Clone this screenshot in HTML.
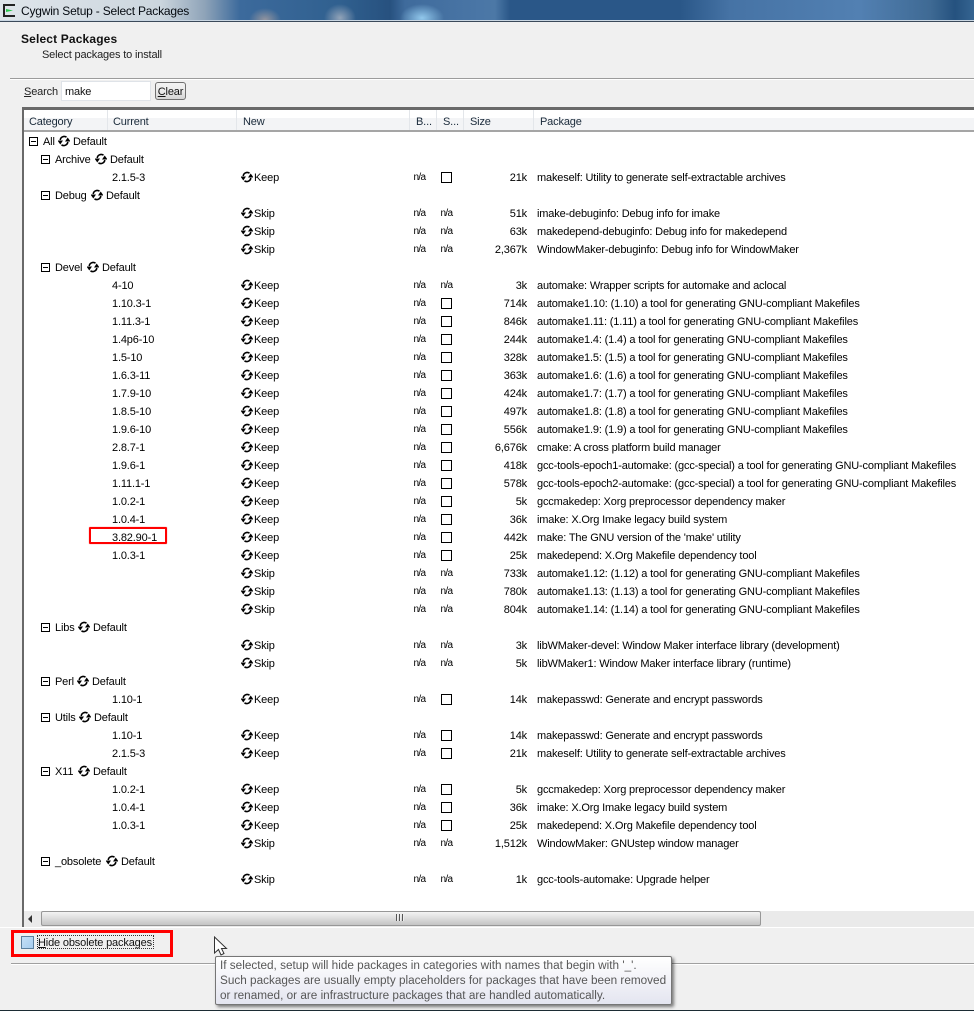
<!DOCTYPE html>
<html><head><meta charset="utf-8"><style>
html,body{margin:0;padding:0;width:974px;height:1011px;overflow:hidden;background:#f0f0f0}
body{position:relative;font-family:"Liberation Sans",sans-serif;font-size:11px;letter-spacing:-.16px;color:#000}
div,span,i,b,svg{position:absolute;white-space:nowrap;font-style:normal;font-weight:normal}
#tb{left:0;top:0;width:974px;height:20px;background:
radial-gradient(ellipse 16px 12px at 265px 20px,rgba(170,160,160,.8),transparent),
radial-gradient(ellipse 16px 14px at 340px 18px,rgba(170,180,195,.8),transparent),
radial-gradient(ellipse 22px 14px at 422px 18px,rgba(150,205,240,.95),transparent),
linear-gradient(90deg,#dfe5ea 0,#ccd6de 160px,#8ea3b8 205px,#3c6a9c 240px,#30608f 340px,#27517f 390px,#3f6b9c 405px,#4a76a6 480px,#4c78a6 495px,#2a5788 510px,#2a5788 680px,#4673a5 730px,#5280b2 860px,#3f6a94 930px,#25527f 955px,#356491 974px)}
.r{left:0;width:974px;height:18px;line-height:20px}
.c{top:0}
.v{left:112px}.n{left:254px}.m{left:413.5px;font-size:10px;letter-spacing:-.7px}.m2{left:440.5px;font-size:10px;letter-spacing:-.7px}
.s{right:447px}.p{left:537px}
.bx{left:441px;top:4px;width:9px;height:9px;border:1px solid #000;background:#fff}
.ic{left:241px;top:3px;width:12px;height:12px}
.e{width:7px;height:7px;border:1px solid #000;top:5px;background:#fff}
.e:after{content:"";position:absolute;left:1px;top:3px;width:5px;height:1px;background:#000}
.h{top:110px;height:20px;line-height:24px;color:#1a2a3a}
.sp{top:110px;width:1px;height:20px;background:#e3e6ea}
u{text-decoration:underline}
.t{left:220px;line-height:15px;color:#575757;font-size:11.75px;letter-spacing:0}
</style></head><body>
<svg width="0" height="0"><defs><symbol id="y" viewBox="0 0 12 12"><path d="M2.2 5A4 4 0 0 1 8.500 2.200" fill="none" stroke="#000" stroke-width="1.600"/><path d="M9.800 7A4 4 0 0 1 3.500 9.800" fill="none" stroke="#000" stroke-width="1.600"/><path d="M-.5 5.500h5.500L2.300 9.500zM7 6.500h5.500L9.700 2.500z"/></symbol></defs></svg>
<div id="tb"></div>
<div style="left:0;top:20px;width:974px;height:1px;background:#c9d6e2"></div>
<div style="left:0;top:21px;width:974px;height:1px;background:#3b4a5a"></div>
<svg style="left:1px;top:3px" width="15" height="15" viewBox="0 0 15 15"><path d="M2 1h12v2H4v9h10v2H2z" fill="#222"/><path d="M5 6l7 1.500-7 1.500z" fill="#27c84a"/></svg>
<div style="left:21px;top:3px;line-height:16px;font-size:12px;letter-spacing:-.2px;color:#050a10">Cygwin Setup - Select Packages</div>
<div style="left:21px;top:31px;line-height:16px;font-weight:bold;color:#111;font-size:12px;letter-spacing:.15px">Select Packages</div>
<div style="left:42px;top:47px;line-height:16px;color:#222">Select packages to install</div>
<div style="left:10px;top:78px;width:964px;height:1px;background:#9c9c9c"></div>
<div style="left:10px;top:79px;width:964px;height:1px;background:#fff"></div>
<div style="left:24px;top:84px;line-height:16px;color:#222"><u>S</u>earch</div>
<div style="left:61px;top:81px;width:88px;height:18px;background:#fff;border:1px solid #dfe3e8;line-height:20px;text-indent:3px;color:#111">make</div>
<div style="left:155px;top:82px;width:29px;height:16px;border:1px solid #707070;border-radius:3px;background:linear-gradient(#f2f2f2,#ebebeb 50%,#d5d5d5);line-height:18px;text-align:center;color:#111"><u>C</u>lear</div>

<div style="left:22px;top:107px;width:952px;height:820px;background:#fff"></div>
<div style="left:22px;top:107px;width:952px;height:3px;background:#696969"></div>
<div style="left:22px;top:107px;width:2px;height:820px;background:#696969"></div>
<div style="left:24px;top:110px;width:950px;height:7px;background:#fff"></div>
<div style="left:24px;top:118px;width:950px;height:12px;background:#f3f4f6"></div>
<div style="left:24px;top:130px;width:950px;height:2px;background:#a5a5a5"></div>
<div class="sp" style="left:107px"></div><div class="sp" style="left:236px"></div><div class="sp" style="left:409px"></div><div class="sp" style="left:436px"></div><div class="sp" style="left:463px"></div><div class="sp" style="left:533px"></div>
<div class="h" style="left:29px">Category</div><div class="h" style="left:113px">Current</div><div class="h" style="left:243px">New</div><div class="h" style="left:416px">B...</div><div class="h" style="left:443px">S...</div><div class="h" style="left:470px">Size</div><div class="h" style="left:540px">Package</div>

<div style="left:89px;top:527px;width:74px;height:13px;border:2px solid #f00;border-radius:1px;box-shadow:0 0 1px #f66"></div>

<div class="r" style="top:132px"><i class="e" style="left:29px"></i><i class="c" style="left:43px">All</i><svg style="left:58px;top:3px" width="12" height="12"><use href="#y"/></svg><i class="c" style="left:73px">Default</i></div>
<div class="r" style="top:150px"><i class="e" style="left:41px"></i><i class="c" style="left:55px">Archive</i><svg style="left:95px;top:3px" width="12" height="12"><use href="#y"/></svg><i class="c" style="left:110px">Default</i></div>
<div class="r" style="top:168px"><i class="v">2.1.5-3</i><svg class="ic"><use href="#y"/></svg><i class="n">Keep</i><i class="m">n/a</i><i class="bx"></i><i class="s">21k</i><i class="p">makeself: Utility to generate self-extractable archives</i></div>
<div class="r" style="top:186px"><i class="e" style="left:41px"></i><i class="c" style="left:55px">Debug</i><svg style="left:91px;top:3px" width="12" height="12"><use href="#y"/></svg><i class="c" style="left:106px">Default</i></div>
<div class="r" style="top:204px"><svg class="ic"><use href="#y"/></svg><i class="n">Skip</i><i class="m">n/a</i><i class="m2">n/a</i><i class="s">51k</i><i class="p">imake-debuginfo: Debug info for imake</i></div>
<div class="r" style="top:222px"><svg class="ic"><use href="#y"/></svg><i class="n">Skip</i><i class="m">n/a</i><i class="m2">n/a</i><i class="s">63k</i><i class="p">makedepend-debuginfo: Debug info for makedepend</i></div>
<div class="r" style="top:240px"><svg class="ic"><use href="#y"/></svg><i class="n">Skip</i><i class="m">n/a</i><i class="m2">n/a</i><i class="s">2,367k</i><i class="p">WindowMaker-debuginfo: Debug info for WindowMaker</i></div>
<div class="r" style="top:258px"><i class="e" style="left:41px"></i><i class="c" style="left:55px">Devel</i><svg style="left:87px;top:3px" width="12" height="12"><use href="#y"/></svg><i class="c" style="left:102px">Default</i></div>
<div class="r" style="top:276px"><i class="v">4-10</i><svg class="ic"><use href="#y"/></svg><i class="n">Keep</i><i class="m">n/a</i><i class="m2">n/a</i><i class="s">3k</i><i class="p">automake: Wrapper scripts for automake and aclocal</i></div>
<div class="r" style="top:294px"><i class="v">1.10.3-1</i><svg class="ic"><use href="#y"/></svg><i class="n">Keep</i><i class="m">n/a</i><i class="bx"></i><i class="s">714k</i><i class="p">automake1.10: (1.10) a tool for generating GNU-compliant Makefiles</i></div>
<div class="r" style="top:312px"><i class="v">1.11.3-1</i><svg class="ic"><use href="#y"/></svg><i class="n">Keep</i><i class="m">n/a</i><i class="bx"></i><i class="s">846k</i><i class="p">automake1.11: (1.11) a tool for generating GNU-compliant Makefiles</i></div>
<div class="r" style="top:330px"><i class="v">1.4p6-10</i><svg class="ic"><use href="#y"/></svg><i class="n">Keep</i><i class="m">n/a</i><i class="bx"></i><i class="s">244k</i><i class="p">automake1.4: (1.4) a tool for generating GNU-compliant Makefiles</i></div>
<div class="r" style="top:348px"><i class="v">1.5-10</i><svg class="ic"><use href="#y"/></svg><i class="n">Keep</i><i class="m">n/a</i><i class="bx"></i><i class="s">328k</i><i class="p">automake1.5: (1.5) a tool for generating GNU-compliant Makefiles</i></div>
<div class="r" style="top:366px"><i class="v">1.6.3-11</i><svg class="ic"><use href="#y"/></svg><i class="n">Keep</i><i class="m">n/a</i><i class="bx"></i><i class="s">363k</i><i class="p">automake1.6: (1.6) a tool for generating GNU-compliant Makefiles</i></div>
<div class="r" style="top:384px"><i class="v">1.7.9-10</i><svg class="ic"><use href="#y"/></svg><i class="n">Keep</i><i class="m">n/a</i><i class="bx"></i><i class="s">424k</i><i class="p">automake1.7: (1.7) a tool for generating GNU-compliant Makefiles</i></div>
<div class="r" style="top:402px"><i class="v">1.8.5-10</i><svg class="ic"><use href="#y"/></svg><i class="n">Keep</i><i class="m">n/a</i><i class="bx"></i><i class="s">497k</i><i class="p">automake1.8: (1.8) a tool for generating GNU-compliant Makefiles</i></div>
<div class="r" style="top:420px"><i class="v">1.9.6-10</i><svg class="ic"><use href="#y"/></svg><i class="n">Keep</i><i class="m">n/a</i><i class="bx"></i><i class="s">556k</i><i class="p">automake1.9: (1.9) a tool for generating GNU-compliant Makefiles</i></div>
<div class="r" style="top:438px"><i class="v">2.8.7-1</i><svg class="ic"><use href="#y"/></svg><i class="n">Keep</i><i class="m">n/a</i><i class="bx"></i><i class="s">6,676k</i><i class="p">cmake: A cross platform build manager</i></div>
<div class="r" style="top:456px"><i class="v">1.9.6-1</i><svg class="ic"><use href="#y"/></svg><i class="n">Keep</i><i class="m">n/a</i><i class="bx"></i><i class="s">418k</i><i class="p">gcc-tools-epoch1-automake: (gcc-special) a tool for generating GNU-compliant Makefiles</i></div>
<div class="r" style="top:474px"><i class="v">1.11.1-1</i><svg class="ic"><use href="#y"/></svg><i class="n">Keep</i><i class="m">n/a</i><i class="bx"></i><i class="s">578k</i><i class="p">gcc-tools-epoch2-automake: (gcc-special) a tool for generating GNU-compliant Makefiles</i></div>
<div class="r" style="top:492px"><i class="v">1.0.2-1</i><svg class="ic"><use href="#y"/></svg><i class="n">Keep</i><i class="m">n/a</i><i class="bx"></i><i class="s">5k</i><i class="p">gccmakedep: Xorg preprocessor dependency maker</i></div>
<div class="r" style="top:510px"><i class="v">1.0.4-1</i><svg class="ic"><use href="#y"/></svg><i class="n">Keep</i><i class="m">n/a</i><i class="bx"></i><i class="s">36k</i><i class="p">imake: X.Org Imake legacy build system</i></div>
<div class="r" style="top:528px"><i class="v">3.82.90-1</i><svg class="ic"><use href="#y"/></svg><i class="n">Keep</i><i class="m">n/a</i><i class="bx"></i><i class="s">442k</i><i class="p">make: The GNU version of the 'make' utility</i></div>
<div class="r" style="top:546px"><i class="v">1.0.3-1</i><svg class="ic"><use href="#y"/></svg><i class="n">Keep</i><i class="m">n/a</i><i class="bx"></i><i class="s">25k</i><i class="p">makedepend: X.Org Makefile dependency tool</i></div>
<div class="r" style="top:564px"><svg class="ic"><use href="#y"/></svg><i class="n">Skip</i><i class="m">n/a</i><i class="m2">n/a</i><i class="s">733k</i><i class="p">automake1.12: (1.12) a tool for generating GNU-compliant Makefiles</i></div>
<div class="r" style="top:582px"><svg class="ic"><use href="#y"/></svg><i class="n">Skip</i><i class="m">n/a</i><i class="m2">n/a</i><i class="s">780k</i><i class="p">automake1.13: (1.13) a tool for generating GNU-compliant Makefiles</i></div>
<div class="r" style="top:600px"><svg class="ic"><use href="#y"/></svg><i class="n">Skip</i><i class="m">n/a</i><i class="m2">n/a</i><i class="s">804k</i><i class="p">automake1.14: (1.14) a tool for generating GNU-compliant Makefiles</i></div>
<div class="r" style="top:618px"><i class="e" style="left:41px"></i><i class="c" style="left:55px">Libs</i><svg style="left:78px;top:3px" width="12" height="12"><use href="#y"/></svg><i class="c" style="left:93px">Default</i></div>
<div class="r" style="top:636px"><svg class="ic"><use href="#y"/></svg><i class="n">Skip</i><i class="m">n/a</i><i class="m2">n/a</i><i class="s">3k</i><i class="p">libWMaker-devel: Window Maker interface library (development)</i></div>
<div class="r" style="top:654px"><svg class="ic"><use href="#y"/></svg><i class="n">Skip</i><i class="m">n/a</i><i class="m2">n/a</i><i class="s">5k</i><i class="p">libWMaker1: Window Maker interface library (runtime)</i></div>
<div class="r" style="top:672px"><i class="e" style="left:41px"></i><i class="c" style="left:55px">Perl</i><svg style="left:77px;top:3px" width="12" height="12"><use href="#y"/></svg><i class="c" style="left:92px">Default</i></div>
<div class="r" style="top:690px"><i class="v">1.10-1</i><svg class="ic"><use href="#y"/></svg><i class="n">Keep</i><i class="m">n/a</i><i class="bx"></i><i class="s">14k</i><i class="p">makepasswd: Generate and encrypt passwords</i></div>
<div class="r" style="top:708px"><i class="e" style="left:41px"></i><i class="c" style="left:55px">Utils</i><svg style="left:79px;top:3px" width="12" height="12"><use href="#y"/></svg><i class="c" style="left:94px">Default</i></div>
<div class="r" style="top:726px"><i class="v">1.10-1</i><svg class="ic"><use href="#y"/></svg><i class="n">Keep</i><i class="m">n/a</i><i class="bx"></i><i class="s">14k</i><i class="p">makepasswd: Generate and encrypt passwords</i></div>
<div class="r" style="top:744px"><i class="v">2.1.5-3</i><svg class="ic"><use href="#y"/></svg><i class="n">Keep</i><i class="m">n/a</i><i class="bx"></i><i class="s">21k</i><i class="p">makeself: Utility to generate self-extractable archives</i></div>
<div class="r" style="top:762px"><i class="e" style="left:41px"></i><i class="c" style="left:55px">X11</i><svg style="left:78px;top:3px" width="12" height="12"><use href="#y"/></svg><i class="c" style="left:93px">Default</i></div>
<div class="r" style="top:780px"><i class="v">1.0.2-1</i><svg class="ic"><use href="#y"/></svg><i class="n">Keep</i><i class="m">n/a</i><i class="bx"></i><i class="s">5k</i><i class="p">gccmakedep: Xorg preprocessor dependency maker</i></div>
<div class="r" style="top:798px"><i class="v">1.0.4-1</i><svg class="ic"><use href="#y"/></svg><i class="n">Keep</i><i class="m">n/a</i><i class="bx"></i><i class="s">36k</i><i class="p">imake: X.Org Imake legacy build system</i></div>
<div class="r" style="top:816px"><i class="v">1.0.3-1</i><svg class="ic"><use href="#y"/></svg><i class="n">Keep</i><i class="m">n/a</i><i class="bx"></i><i class="s">25k</i><i class="p">makedepend: X.Org Makefile dependency tool</i></div>
<div class="r" style="top:834px"><svg class="ic"><use href="#y"/></svg><i class="n">Skip</i><i class="m">n/a</i><i class="m2">n/a</i><i class="s">1,512k</i><i class="p">WindowMaker: GNUstep window manager</i></div>
<div class="r" style="top:852px"><i class="e" style="left:41px"></i><i class="c" style="left:55px">_obsolete</i><svg style="left:106px;top:3px" width="12" height="12"><use href="#y"/></svg><i class="c" style="left:121px">Default</i></div>
<div class="r" style="top:870px"><svg class="ic"><use href="#y"/></svg><i class="n">Skip</i><i class="m">n/a</i><i class="m2">n/a</i><i class="s">1k</i><i class="p">gcc-tools-automake: Upgrade helper</i></div>

<div style="left:24px;top:911px;width:950px;height:16px;background:#eaeaea"></div>
<div style="left:28px;top:915px;width:0;height:0;border:4px solid transparent;border-right:4px solid #333;border-left:0"></div>
<div style="left:41px;top:911px;width:718px;height:13px;border:1px solid #979797;border-radius:2px;background:linear-gradient(#f3f3f3,#dcdcdc 50%,#c4c4c4)"></div>
<div style="left:396px;top:914px;width:9px;height:7px;background:repeating-linear-gradient(90deg,#555 0 1px,#eee 1px 2px,transparent 2px 3px)"></div>
<div style="left:0;top:927px;width:974px;height:1px;background:#fff"></div>

<div style="left:11px;top:930px;width:156px;height:21px;border:3px solid #f00"></div>
<div style="left:21px;top:936px;width:11px;height:11px;border:1px solid #5a7f9e;background:linear-gradient(135deg,#c5dff5,#a6cdef)"></div>
<div style="left:37px;top:935px;width:115px;height:12px;border:1px dotted #333"></div>
<div style="left:38px;top:935px;line-height:16px;color:#111"><u>H</u>ide obsolete packages</div>

<div style="left:11px;top:963px;width:963px;height:1px;background:#a0a0a0"></div>
<div style="left:11px;top:964px;width:963px;height:1px;background:#fff"></div>

<svg style="left:213px;top:936px" width="16" height="22" viewBox="0 0 16 22"><path d="M1.500 1v16l4-3.500 2.500 5.500 3-1.500-2.500-5h5z" fill="#fff" stroke="#333" stroke-width="1"/></svg>

<div style="left:215px;top:956px;width:455px;height:47px;border:1px solid #767676;border-radius:2px;background:linear-gradient(#fff,#e4e5f0);box-shadow:2px 2px 3px rgba(0,0,0,.5)"></div>
<div class="t" style="top:958px">If selected, setup will hide packages in categories with names that begin with '_'.</div>
<div class="t" style="top:973px">Such packages are usually empty placeholders for packages that have been removed</div>
<div class="t" style="top:988px">or renamed, or are infrastructure packages that are handled automatically.</div>

<div style="left:0;top:1010px;width:974px;height:1px;background:#1c2c34"></div>
</body></html>
